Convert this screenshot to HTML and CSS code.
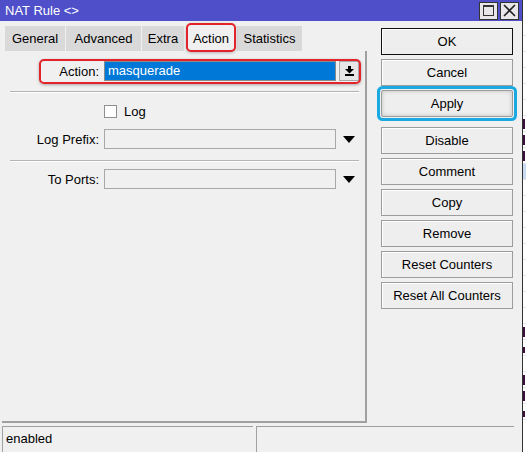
FILE: index.html
```html
<!DOCTYPE html>
<html lang="en">
<head>
    <meta charset="UTF-8">
    <title>NAT Rule</title>
    <link rel="stylesheet" href="styles.css">
</head>
<body>
    <div class="window">
        <div class="titlebar">
            <span class="title">NAT Rule &lt;&gt;</span>
            <div class="title-btns">
                <span class="tbtn"><span class="max-box"></span></span>
                <span class="tbtn">
                    <svg width="13" height="13" viewBox="0 0 13 13"><path d="M1 1 L12 12 M12 1 L1 12" stroke="#222" stroke-width="1.6"/></svg>
                </span>
            </div>
        </div>

        <div class="main">
            <div class="left">
                <div class="tabs">
                    <div class="tab" style="width:60px">General</div>
                    <div class="tab" style="width:75px">Advanced</div>
                    <div class="tab" style="width:42px">Extra</div>
                    <div class="tab active">Action</div>
                    <div class="tab" style="width:65px">Statistics</div>
                </div>
                <div class="panel">
                    <div class="row first">
                        <span class="mark"></span>
                        <label class="lbl">Action:</label>
                        <div class="select">masquerade</div>
                        <div class="drop-btn">
                            <svg width="9" height="10" viewBox="0 0 9 10"><rect x="3" y="0" width="3" height="3" fill="#000"/><path d="M0 3 H9 L4.5 7.5 Z" fill="#000"/><rect x="0" y="8" width="9" height="2" fill="#000"/></svg>
                        </div>
                    </div>
                    <div class="sep"></div>
                    <div class="row check-row">
                        <span class="lbl"></span>
                        <span class="checkbox"></span>
                        <span class="check-text">Log</span>
                    </div>
                    <div class="row">
                        <label class="lbl">Log Prefix:</label>
                        <div class="field"></div>
                        <div class="arrow"><svg width="12" height="7" viewBox="0 0 12 7"><path d="M0 0 H12 L6 7 Z" fill="#000"/></svg></div>
                    </div>
                    <div class="sep sep2"></div>
                    <div class="row ports">
                        <label class="lbl">To Ports:</label>
                        <div class="field"></div>
                        <div class="arrow"><svg width="12" height="7" viewBox="0 0 12 7"><path d="M0 0 H12 L6 7 Z" fill="#000"/></svg></div>
                    </div>
                </div>
            </div>

            <div class="buttons">
                <button class="btn default">OK</button>
                <button class="btn">Cancel</button>
                <button class="btn apply">Apply</button>
                <button class="btn">Disable</button>
                <button class="btn">Comment</button>
                <button class="btn">Copy</button>
                <button class="btn">Remove</button>
                <button class="btn">Reset Counters</button>
                <button class="btn">Reset All Counters</button>
            </div>
        </div>

        <div class="status">
            <div class="cell c1">enabled</div>
            <div class="cell c2"></div>
        </div>
    </div>

    <!-- edge of the rules list behind the dialog -->
    <div class="behind">
        <div class="brow"></div>
        <div class="brow"></div>
        <div class="brow"></div>
        <div class="brow"></div>
        <div class="brow"></div>
        <div class="brow"></div>
        <div class="brow"><span class="stub"></span></div>
        <div class="brow"><span class="stub"></span></div>
        <div class="brow"><span class="stub"></span></div>
        <div class="brow sel"></div>
        <div class="brow"></div>
        <div class="brow"></div>
        <div class="brow"></div>
        <div class="brow"></div>
        <div class="brow"></div>
        <div class="brow"></div>
        <div class="brow"></div>
        <div class="brow"></div>
        <div class="brow"></div>
        <div class="brow"><span class="stub"></span></div>
        <div class="brow"><span class="stub short"></span></div>
        <div class="brow"></div>
        <div class="brow"><span class="stub"></span></div>
        <div class="brow"><span class="stub"></span></div>
        <div class="brow"><span class="stub short"></span></div>
    </div>
</body>
</html>
```

FILE: styles.css
```css
body {
    margin: 0;
    width: 526px;
    height: 452px;
    overflow: hidden;
    display: flex;
    font-family: "Liberation Sans", Arial, sans-serif;
    font-size: 13px;
    color: #000;
    background: #f0f0f0;
}
.window {
    width: 522px;
    height: 452px;
    display: flex;
    flex-direction: column;
    background: #f0f0f0;
}

/* title bar */
.titlebar {
    height: 21px;
    background: #4e4fc9;
    color: #fff;
    display: flex;
    align-items: center;
    padding-left: 5px;
}
.title-btns { margin-left: auto; display: flex; gap: 2px; margin-right: 3px; }
.tbtn {
    width: 19px;
    height: 18px;
    box-sizing: border-box;
    background: #e9e6ea;
    border: 1px solid #333;
    display: flex;
    align-items: center;
    justify-content: center;
}
.max-box { width: 11px; height: 11px; border: 1px solid #333; border-top-width: 2px; box-sizing: border-box; }

.main { flex: 1; display: flex; }
.left {
    width: 367px;
    display: flex;
    flex-direction: column;
    padding-top: 5px;
}

/* tabs */
.tabs {
    display: flex;
    align-items: flex-end;
    gap: 1px;
    padding-left: 5px;
    height: 25px;
}
.tab {
    height: 25px;
    line-height: 26px;
    text-align: center;
    background: #d9d9d9;
    white-space: nowrap;
}
.tab.active {
    width: 50px;
    height: 29px;
    line-height: 27px;
    margin-bottom: -1px;
    margin-left: 1px;
    box-sizing: border-box;
    background: #f0f0f0;
    border: 2px solid #e3232a;
    border-radius: 5px;
    box-shadow: 0 1px 3px rgba(0,0,0,0.25);
    position: relative;
    z-index: 1;
}

.panel {
    flex: 1;
    margin-left: 2px;
    border-right: 2px solid #a0a0a0;
    border-bottom: 2px solid #a0a0a0;
    box-sizing: border-box;
}
.row {
    display: flex;
    align-items: center;
    height: 20px;
    margin-top: 8px;
    position: relative;
}
.row.first { margin-top: 10px; }
.row.ports { margin-top: 7px; }
.lbl {
    width: 97px;
    text-align: right;
    margin-right: 5px;
    flex: none;
}
.mark {
    position: absolute;
    left: 37px;
    top: -2px;
    width: 322px;
    height: 25px;
    box-sizing: border-box;
    border: 2px solid #e3232a;
    border-radius: 5px;
    box-shadow: 0 1px 3px rgba(0,0,0,0.3);
}
.select {
    width: 232px;
    height: 20px;
    box-sizing: border-box;
    border: 1px solid #8a8a8a;
    background: #0078d7;
    color: #fff;
    padding-left: 3px;
    line-height: 18px;
}
.drop-btn {
    width: 20px;
    height: 20px;
    box-sizing: border-box;
    margin-left: 3px;
    background: #e6e6e6;
    border: 1px solid #a8a8a8;
    display: flex;
    align-items: center;
    justify-content: center;
}
.sep {
    margin: 10px 6px 0 8px;
    border-top: 1px solid #b4b4b4;
    border-bottom: 1px solid #fff;
}
.sep.sep2 { margin-top: 11px; }
.checkbox {
    width: 13px;
    height: 13px;
    box-sizing: border-box;
    background: #fff;
    border: 1px solid #8f8f8f;
}
.check-text { margin-left: 7px; }
.field {
    width: 232px;
    height: 20px;
    box-sizing: border-box;
    border: 1px solid #a8a8a8;
    background: #f0f0f0;
}
.arrow {
    width: 20px;
    margin-left: 3px;
    display: flex;
    justify-content: center;
    padding-top: 1px;
}

/* command buttons */
.buttons {
    width: 132px;
    margin-left: 14px;
    padding-top: 7px;
    display: flex;
    flex-direction: column;
    gap: 4px;
}
.btn {
    height: 27px;
    font-family: inherit;
    font-size: 13px;
    color: #000;
    background: #eeeeee;
    border: 1px solid #9c9c9c;
    box-shadow: inset 1px 1px #fff;
    padding: 0;
}
.btn.default { border-color: #111; }
.btn.apply {
    margin-bottom: 6px;
    border-radius: 2px;
    box-shadow: inset 0 0 4px rgba(0,0,0,0.2), 0 0 0 1px #f0f0f0, 0 0 0 4px #1aa9e1;
}

/* status bar */
.status {
    height: 26px;
    margin-top: 3px;
    display: flex;
    gap: 3px;
    padding-left: 2px;
}
.cell {
    box-sizing: border-box;
    border-top: 1px solid #a0a0a0;
    border-left: 1px solid #a0a0a0;
    padding-left: 3px;
    line-height: 24px;
}
.c1 { width: 251px; }
.c2 { width: 258px; }

/* list behind the dialog */
.behind {
    flex: 1;
    background: #fff;
    border-left: 1px solid #333;
    padding-top: 20px;
    overflow: hidden;
}
.brow {
    height: 15px;
    border-bottom: 1px solid #e4e4e4;
    display: flex;
    align-items: center;
}
.stub {
    width: 2px;
    height: 10px;
    background: #3b0d3b;
}
.stub.short { height: 6px; margin-top: 4px; }
.brow.sel { background: #c9dcf3; }
```
